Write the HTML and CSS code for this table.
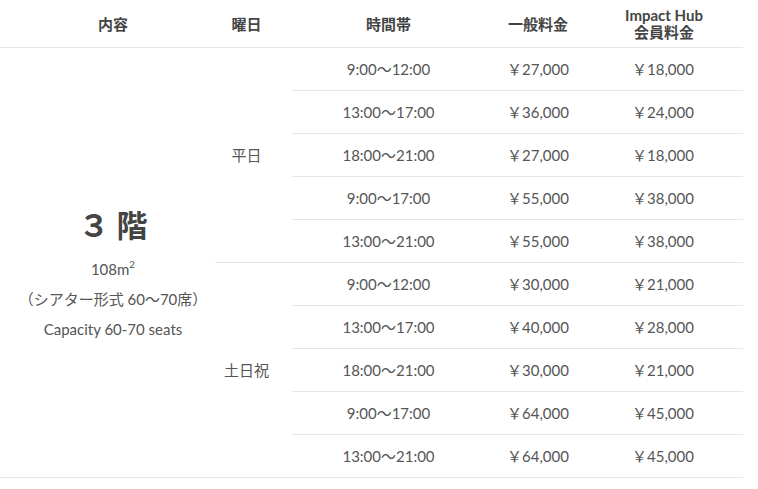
FILE: index.html
```html
<!DOCTYPE html>
<html lang="ja">
<head>
<meta charset="utf-8">
<link rel="stylesheet" href="styles.css">
</head>
<body>
<table class="price">
  <colgroup>
    <col class="c1"><col class="c2"><col class="c3"><col class="c4"><col class="c5">
  </colgroup>
  <thead>
    <tr>
      <th class="h1">内容</th>
      <th class="h2">曜日</th>
      <th>時間帯</th>
      <th>一般料金</th>
      <th class="h5">Impact Hub<br>会員料金</th>
    </tr>
  </thead>
  <tbody>
    <tr>
      <td class="room" rowspan="10">
        <div class="floor">３ 階</div>
        <div class="line">108m<sup>2</sup></div>
        <div class="line">（シアター形式 60〜70席）</div>
        <div class="line">Capacity 60-70 seats</div>
      </td>
      <td class="day" rowspan="5">平日</td>
      <td>9:00〜12:00</td><td>￥27,000</td><td class="m">￥18,000</td>
    </tr>
    <tr><td>13:00〜17:00</td><td>￥36,000</td><td class="m">￥24,000</td></tr>
    <tr><td>18:00〜21:00</td><td>￥27,000</td><td class="m">￥18,000</td></tr>
    <tr><td>9:00〜17:00</td><td>￥55,000</td><td class="m">￥38,000</td></tr>
    <tr><td>13:00〜21:00</td><td>￥55,000</td><td class="m">￥38,000</td></tr>
    <tr>
      <td class="day" rowspan="5">土日祝</td>
      <td>9:00〜12:00</td><td>￥30,000</td><td class="m">￥21,000</td>
    </tr>
    <tr><td>13:00〜17:00</td><td>￥40,000</td><td class="m">￥28,000</td></tr>
    <tr><td>18:00〜21:00</td><td>￥30,000</td><td class="m">￥21,000</td></tr>
    <tr><td>9:00〜17:00</td><td>￥64,000</td><td class="m">￥45,000</td></tr>
    <tr><td>13:00〜21:00</td><td>￥64,000</td><td class="m">￥45,000</td></tr>
  </tbody>
</table>
</body>
</html>
```
FILE: styles.css
```css
html, body {
  margin: 0;
  padding: 0;
  background: #fff;
}
body {
  font-family: Lato, "Noto Sans CJK JP", sans-serif;
  color: #555;
  font-size: 15px;
}
.price {
  width: 743px;
  border-collapse: separate;
  border-spacing: 0;
  table-layout: fixed;
}
.c1 { width: 215px; }
.c2 { width: 77px; }
.c3 { width: 193px; }
.c4 { width: 106px; }
.c5 { width: 152px; }

.price th {
  font-weight: bold;
  color: #444;
  font-size: 15px;
  line-height: 17px;
  padding: 7px 0 6px;
  border-bottom: 1px solid #e6e6e6;
  text-align: center;
  vertical-align: middle;
}
.price th.h1 { padding-left: 11px; }
.price th.h2 { padding-right: 14px; }
.price th.h5 { padding-right: 6px; }

.price td {
  text-align: center;
  vertical-align: middle;
  padding: 12px 0;
  line-height: 18px;
  border-bottom: 1px solid #e6e6e6;
  white-space: nowrap;
}
.price td.m { padding-right: 8px; }
.price td.day { padding-right: 14px; }
.price td.room {
  padding: 22px 0 0 11px;
}
.floor {
  font-family: "Noto Sans CJK JP", sans-serif;
  font-weight: bold;
  font-size: 31px;
  line-height: 40px;
  color: #444;
  margin-bottom: 10px;
}
.line {
  line-height: 30px;
}
.line sup {
  font-size: 10px;
  line-height: 0;
  vertical-align: 7px;
}
```
